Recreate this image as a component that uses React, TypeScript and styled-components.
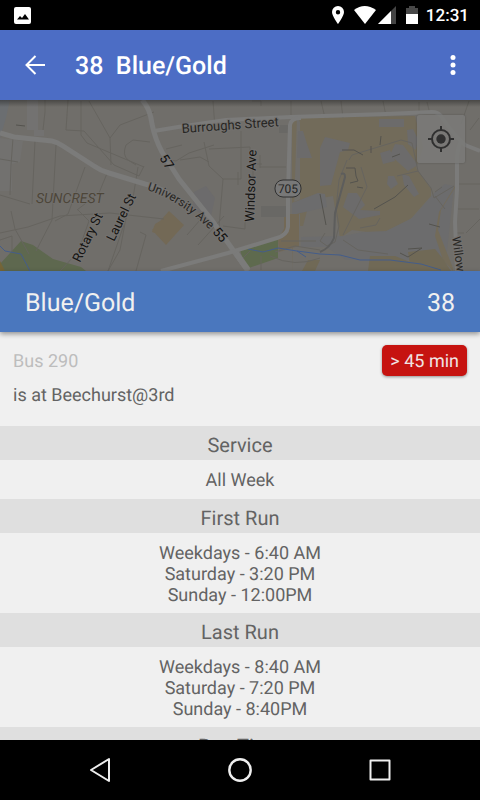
import React from "react";
import styled, { createGlobalStyle } from "styled-components";

const GlobalStyle = createGlobalStyle`
  * { box-sizing: border-box; }
  body { margin: 0; background: #000; font-family: Roboto, sans-serif; text-rendering: geometricPrecision; }
  button { border: 0; padding: 0; background: none; color: inherit; font: inherit; cursor: pointer; }
  svg { display: block; }
  h1, h2, h3, p { margin: 0; }
`;

const Screen = styled.div`
  display: flex;
  flex-direction: column;
  height: 100vh;
  overflow: hidden;
  background: #f0f0f0;
`;

const StatusBar = styled.div`
  flex: none;
  display: flex;
  align-items: center;
  justify-content: space-between;
  height: 30px;
  padding: 0 11px 0 12px;
  background: #000;
  color: #fff;
`;

const StatusGroup = styled.div`
  display: flex;
  align-items: center;
`;

const Clock = styled.time`
  padding-top: 2px;
  font-size: 17px;
  line-height: 24px;
  font-weight: 500;
`;

const AppBar = styled.header`
  flex: none;
  display: flex;
  align-items: center;
  height: 70px;
  padding: 0 12px 0 20px;
  background: #4c6dc5;
  color: #fff;
`;

const IconButton = styled.button`
  display: grid;
  place-items: center;
  width: 30px;
  height: 48px;
`;

const Title = styled.h1`
  flex: 1;
  padding: 4px 0 0 25px;
  font-size: 25px;
  line-height: 32px;
  font-weight: 500;
  white-space: pre;
`;

const MapArea = styled.section`
  position: relative;
  flex: none;
  height: 171px;
  background: #706e6a;
`;

const MapShade = styled.div`
  position: absolute;
  inset: 0 0 auto;
  height: 7px;
  background: linear-gradient(rgba(0, 0, 0, 0.35), transparent);
`;

const LocateButton = styled.button`
  position: absolute;
  top: 15px;
  right: 15px;
  display: grid;
  place-items: center;
  width: 48px;
  height: 48px;
  border-radius: 2px;
  background: rgba(122, 122, 120, 0.88);
  box-shadow: 0 0 2px rgba(0, 0, 0, 0.25);
`;

const RouteBar = styled.div`
  position: relative;
  flex: none;
  display: flex;
  align-items: center;
  justify-content: space-between;
  height: 61px;
  padding: 4px 25px 0;
  background: #4a77be;
  box-shadow: 0 2px 5px rgba(0, 0, 0, 0.4);
  color: #f0f0f0;
  font-size: 25px;
  line-height: 32px;
`;

const RouteName = styled.h2`
  font: inherit;
`;

const Content = styled.main`
  flex: 1;
  min-height: 0;
  overflow: hidden;
`;

const BusCard = styled.section`
  height: 94px;
  padding: 13px 13px 0;
  color: #636363;
  font-size: 18px;
  line-height: 24px;
`;

const BusRow = styled.div`
  display: flex;
  align-items: center;
  justify-content: space-between;
  height: 31px;
  margin-bottom: 8px;
`;

const BusName = styled.h3`
  padding-top: 3px;
  color: #bdbdbd;
  font: inherit;
`;

const EtaBadge = styled.span`
  height: 31px;
  padding: 1px 8px 0;
  border-radius: 5px;
  background: #c61310;
  box-shadow: 0 1px 3px rgba(0, 0, 0, 0.4);
  color: #f0e4e4;
  line-height: 31px;
`;

const SectionTitle = styled.h3`
  height: 34px;
  padding-top: 2px;
  background: #dfdfdf;
  color: #636363;
  font-size: 20px;
  font-weight: 400;
  line-height: 34px;
  text-align: center;
`;

const SectionBody = styled.div`
  min-height: 39px;
  padding: 10px 0 7px;
  color: #636363;
  font-size: 18px;
  line-height: 21px;
  text-align: center;
`;

const NavBar = styled.nav`
  flex: none;
  display: flex;
  justify-content: center;
  gap: 92px;
  height: 60px;
  background: #000;
`;

const NavButton = styled.button`
  display: grid;
  place-items: center;
  width: 48px;
  height: 60px;
`;

const MapDrawing = styled.svg`
  width: 100%;
  height: 100%;
  font-family: Roboto, sans-serif;
`;

const sections = [
  { title: "Service", lines: ["All Week"] },
  { title: "First Run", lines: ["Weekdays - 6:40 AM", "Saturday - 3:20 PM", "Sunday - 12:00PM"] },
  { title: "Last Run", lines: ["Weekdays - 8:40 AM", "Saturday - 7:20 PM", "Sunday - 8:40PM"] },
  { title: "Run Time", lines: [] },
];

function StreetMap() {
  return (
    <MapDrawing viewBox="0 100 480 171" preserveAspectRatio="xMidYMid slice" role="img" aria-label="Street map">
      <rect y="100" width="480" height="171" fill="#706e6a" />
      <path d="M27 100h11v30H27zM34 130h10v6H34z" fill="#737271" />
      <path d="M0 100h10l-4 18-6 20z" fill="#6b6e71" />
      <path d="M0 138l23 3-3 21-8 2v27H0z" fill="#72716f" />
      <path d="M298 118l117-2 8 32-7 20 15 21v7l-23 26-25 12-31-4-12 8-7-42-23 4-7 26h-3V122z" fill="#726b5a" />
      <path d="M292 271v-34l4-23h7l-2-15-9 4v-87h5z" fill="#726b5a" />
      <path d="M298 131h5l4 13 5 14h-15zM325 137l25 6-2 7-8 2-9 33-11 1v-38zM379 119h25v8h-25zM407 130l6-1 5 10-2 11-8-6zM380 153l10-3 5 11-12 3zM395 144l8 1 15 20-10 6-18-16zM348 193h9l8 12-5 5 20 1v4l-21 4-16-12zM388 176h6l4 8-7 5-4-5zM402 174l7 2 10 18-5 3-10-12z" fill="#6c6b6b" />
      <path d="M292 203l26-10 7 1 2 13-35 8zM301 237l42-1 20-4 23-1 26-13 25-28 8-6 9 2-8 74H346l-20-13h-25z" fill="#6c6c6d" />
      <path d="M455 186l-16 26-4 24 8 24 10 11v-3l-8-20-7-18 3-20 15-24z" fill="#736b59" />
      <path d="M308 260h12l-5 11h-13zM370 256h25l20 8 5 7h-52zM408 252l27-3 8 10 8 12h-40z" fill="#706956" />
      <path d="M0 264l21-23 12 4 20 14 28 8 5 4H0z" fill="#5e684f" />
      <path d="M0 261l5 10H0z" fill="#746538" />
      <path d="M240 250l38-12v20l-32 11z" fill="#5e6a4e" />
      <path d="M169 211l15 14-18 20-14-15zM155 224l5-3v14l-8-3zM278 239l6-10v-15h15v32l-20 6z" fill="#736956" />
      <path d="M279 125h10v8h-10zM261 206h26v11h-26z" fill="#696865" />
      <path d="M194 192l12-6 9 12-5 23-17-13z" fill="#6c6b6c" />

      <g fill="none" stroke="#66645f" strokeWidth="1">
        <path d="M45 100v12l-2 18M68 100l-2 30 18 1 30 34 25 11 5-10M81 101v34l6 8 57 24M89 101l21 37M110 138l10-13 34-13M110 138l1 27M126 145q-4 10 2 15l8 5M126 145l7-5 17 2" />
        <path d="M13 138l-2 27-1 30M35 141l-3 63M56 145l-4 75-16 31M85 167l-17 47-13 7M108 171l-9 22-22 17M138 167l-5 31-17 50-8 23" />
        <path d="M0 159l18 3M0 195l30 9M0 233l28-6 32-11 50-3 54 6M11 211l4 18 14 25M0 240l12-4v16M78 210l11 11-11 31-18 19M140 232l6 3-10 36M126 218l-6 32-12 21M164 159l12 2 13-8 25-8M166 149l16-4M204 142l5 24 14 13h18v-48M209 149l41-2v17h12M223 179l-4 48-22-9M198 245l26-29M187 235l20-23M180 160l20-3 9 5M253 164v38M238 172v13M260 155v13M260 167h26M245 216v13l-22-3M213 101l2 27M252 101h9v5M291 118v-17" />
        <path d="M321 101l4 17M341 101l2 17M383 101l3 15M419 102v14M427 102l3 12M469 101l-8 23M470 130l9-12M459 184h21M458 209h21M466 233l14-14M454 233h10" />
        <path d="M349 160l3-5 49-15 11 3 6 28-21 5M347 160l-8 20-3 29 3 17-4 16-8 4-7-5 5-8M343 235l24-48-6-20M360 228l16-3 4-7M343 240l15 10 30 4M418 171l13 17 3 10 20-12M435 192l7-5M435 196l10 13" />
        <path d="M275 252l20-6 25 4M281 241h35M270 256q25 12 50 2M240 261l10-10M261 270v-14" />
      </g>
      <g fill="none" stroke="#54534e">
        <path d="M16 125l9 1M342 150h12l9 5M381 136l-1 9M371 146v7M392 157l8-3M374 209l21-12 13-12M346 168h9l1 8 2 5-8 2M429 224l11 3M400 253l8 4 14-9-14 1M357 187l6 1M320 194l6 31" />
      </g>
      <path d="M341 174q4-2 4 3l-6 22-4 14-1 25q-4 10-14 14" fill="none" stroke="#5d5d5c" strokeWidth="2" />
      <path d="M0 246l5 5 16 3 9 17M248 249l15 3 15-4 19 3 9 6M320 254l20 1 20 5 30 0 31 4 20 6" fill="none" stroke="#445d8a" strokeWidth="1" />
      <path d="M297 251l23 3" fill="none" stroke="#445d8a" strokeWidth="1" />

      <g fill="none" stroke="#7b7b7a" strokeLinejoin="round">
        <path d="M0 133l14 4 38 4q5 1 11 5l31 20q7 5 15 7l36 11q20 4 30 17" strokeWidth="5" />
        <path d="M142 100q8 8 10 24 3 15 10 28l17 27 32 40 37 52" strokeWidth="5" />
        <path d="M154 131l24-4 48-7 65-3 95-3 46-2q6 0 9 4 11 17 24 29l15 6" strokeWidth="4" />
        <path d="M301 118q-10 0-11 7l-2 68v34q-1 8-11 11l-49 15-67 18" strokeWidth="4" />
        <path d="M461 141q-4 9-4 18v31l-2 32 2 49" strokeWidth="4" />
        <path d="M236 253l12 17" strokeWidth="6" />
      </g>

      <g fill="#272623" stroke="#747270" strokeWidth="2" paintOrder="stroke" fontSize="13">
        <text transform="translate(182 133) rotate(-4)">Burroughs Street</text>
        <text transform="translate(159 158) rotate(57)" fill="#0e0e0d">57</text>
        <text transform="translate(212 232) rotate(50)" fill="#0e0e0d">55</text>
        <text transform="translate(254 222) rotate(-88)" fill="#141412">Windsor Ave</text>
        <text transform="translate(80 263) rotate(-64)" fill="#141412">Rotary St</text>
        <text transform="translate(114 242) rotate(-64)" fill="#141412">Laurel St</text>
        <text transform="translate(452 237) rotate(82)" fontSize="12">Willow</text>
        <path id="university-label" d="M147 190Q183 201 220 240" fill="none" stroke="none" />
        <text fontSize="12"><textPath href="#university-label">University Ave</textPath></text>
      </g>
      <text x="36" y="203" fontSize="14" fontStyle="italic" fill="#4d4639" stroke="#747270" strokeWidth="1" paintOrder="stroke">SUNCREST</text>
      <rect x="275" y="180" width="26" height="17" rx="8" fill="#787878" stroke="#303030" />
      <text x="288" y="193" fontSize="12" textAnchor="middle" fill="#252525">705</text>
    </MapDrawing>
  );
}

export default function App() {
  return (
    <>
      <GlobalStyle />
      <Screen>
        <StatusBar>
          <StatusGroup>
            <svg width="20" height="20" viewBox="0 0 20 20" aria-hidden="true">
              <rect x="2" y="2" width="17" height="17" rx="2" fill="#fff" />
              <path d="M5 14.500l3-3.500 2 2 3-4 4 5.500z" fill="#000" />
            </svg>
          </StatusGroup>
          <StatusGroup>
            <svg width="95" height="30" viewBox="330 0 95 30" aria-hidden="true">
              <path fillRule="evenodd" fill="#fff" d="M337 6a6 6 0 0 1 6 6c0 4-6 12-6 12s-6-8-6-12a6 6 0 0 1 6-6zm0 4a2.200 2.200 0 1 0 0 4.400 2.200 2.200 0 0 0 0-4.400z" />
              <path d="M353 10q10.500-8 22 0l-11 14z" fill="#fff" />
              <path d="M395 6v18h-18z" fill="#444" />
              <path d="M390 11v13h-13z" fill="#fff" />
              <path d="M405 8h3V6h6v2h3v6h-12z" fill="#484848" />
              <path d="M405 14h12v10h-12z" fill="#fff" />
            </svg>
            <Clock>12:31</Clock>
          </StatusGroup>
        </StatusBar>
        <AppBar>
          <IconButton aria-label="Back">
            <svg width="22" height="22" viewBox="0 0 22 22" fill="none" stroke="#fff" strokeWidth="2">
              <path d="M21 11H3M11.500 2L2.500 11l9 9" />
            </svg>
          </IconButton>
          <Title>{"38  Blue/Gold"}</Title>
          <IconButton aria-label="More options">
            <svg width="6" height="22" viewBox="0 0 6 22" fill="#fff">
              <circle cx="3" cy="3.500" r="2.500" />
              <circle cx="3" cy="11" r="2.500" />
              <circle cx="3" cy="18.500" r="2.500" />
            </svg>
          </IconButton>
        </AppBar>
        <MapArea>
          <StreetMap />
          <MapShade />
          <LocateButton aria-label="My location">
            <svg width="28" height="28" viewBox="0 0 28 28" fill="none" stroke="#303030" strokeWidth="2">
              <circle cx="14" cy="14" r="9" />
              <circle cx="14" cy="14" r="4.700" fill="#303030" stroke="none" />
              <path d="M14 1v4M14 23v4M1 14h4M23 14h4" />
            </svg>
          </LocateButton>
        </MapArea>
        <RouteBar>
          <RouteName>Blue/Gold</RouteName>
          <span>38</span>
        </RouteBar>
        <Content>
          <BusCard>
            <BusRow>
              <BusName>Bus 290</BusName>
              <EtaBadge>&gt; 45 min</EtaBadge>
            </BusRow>
            <p>is at Beechurst@3rd</p>
          </BusCard>
          {sections.map(({ title, lines }) => (
            <section key={title}>
              <SectionTitle>{title}</SectionTitle>
              <SectionBody>
                {lines.map((line) => (
                  <p key={line}>{line}</p>
                ))}
              </SectionBody>
            </section>
          ))}
        </Content>
        <NavBar aria-label="System navigation">
          <NavButton aria-label="Back">
            <svg width="24" height="26" viewBox="0 0 24 26" fill="none" stroke="#eee" strokeWidth="2" strokeLinejoin="round">
              <path d="M21 2v22L3 13z" />
            </svg>
          </NavButton>
          <NavButton aria-label="Home">
            <svg width="26" height="26" viewBox="0 0 26 26" fill="none" stroke="#eee" strokeWidth="2.400">
              <circle cx="13" cy="13" r="10.700" />
            </svg>
          </NavButton>
          <NavButton aria-label="Overview">
            <svg width="24" height="24" viewBox="0 0 24 24" fill="none" stroke="#eee" strokeWidth="2" strokeLinejoin="round">
              <rect x="2.500" y="2.500" width="19" height="19" />
            </svg>
          </NavButton>
        </NavBar>
      </Screen>
    </>
  );
}
